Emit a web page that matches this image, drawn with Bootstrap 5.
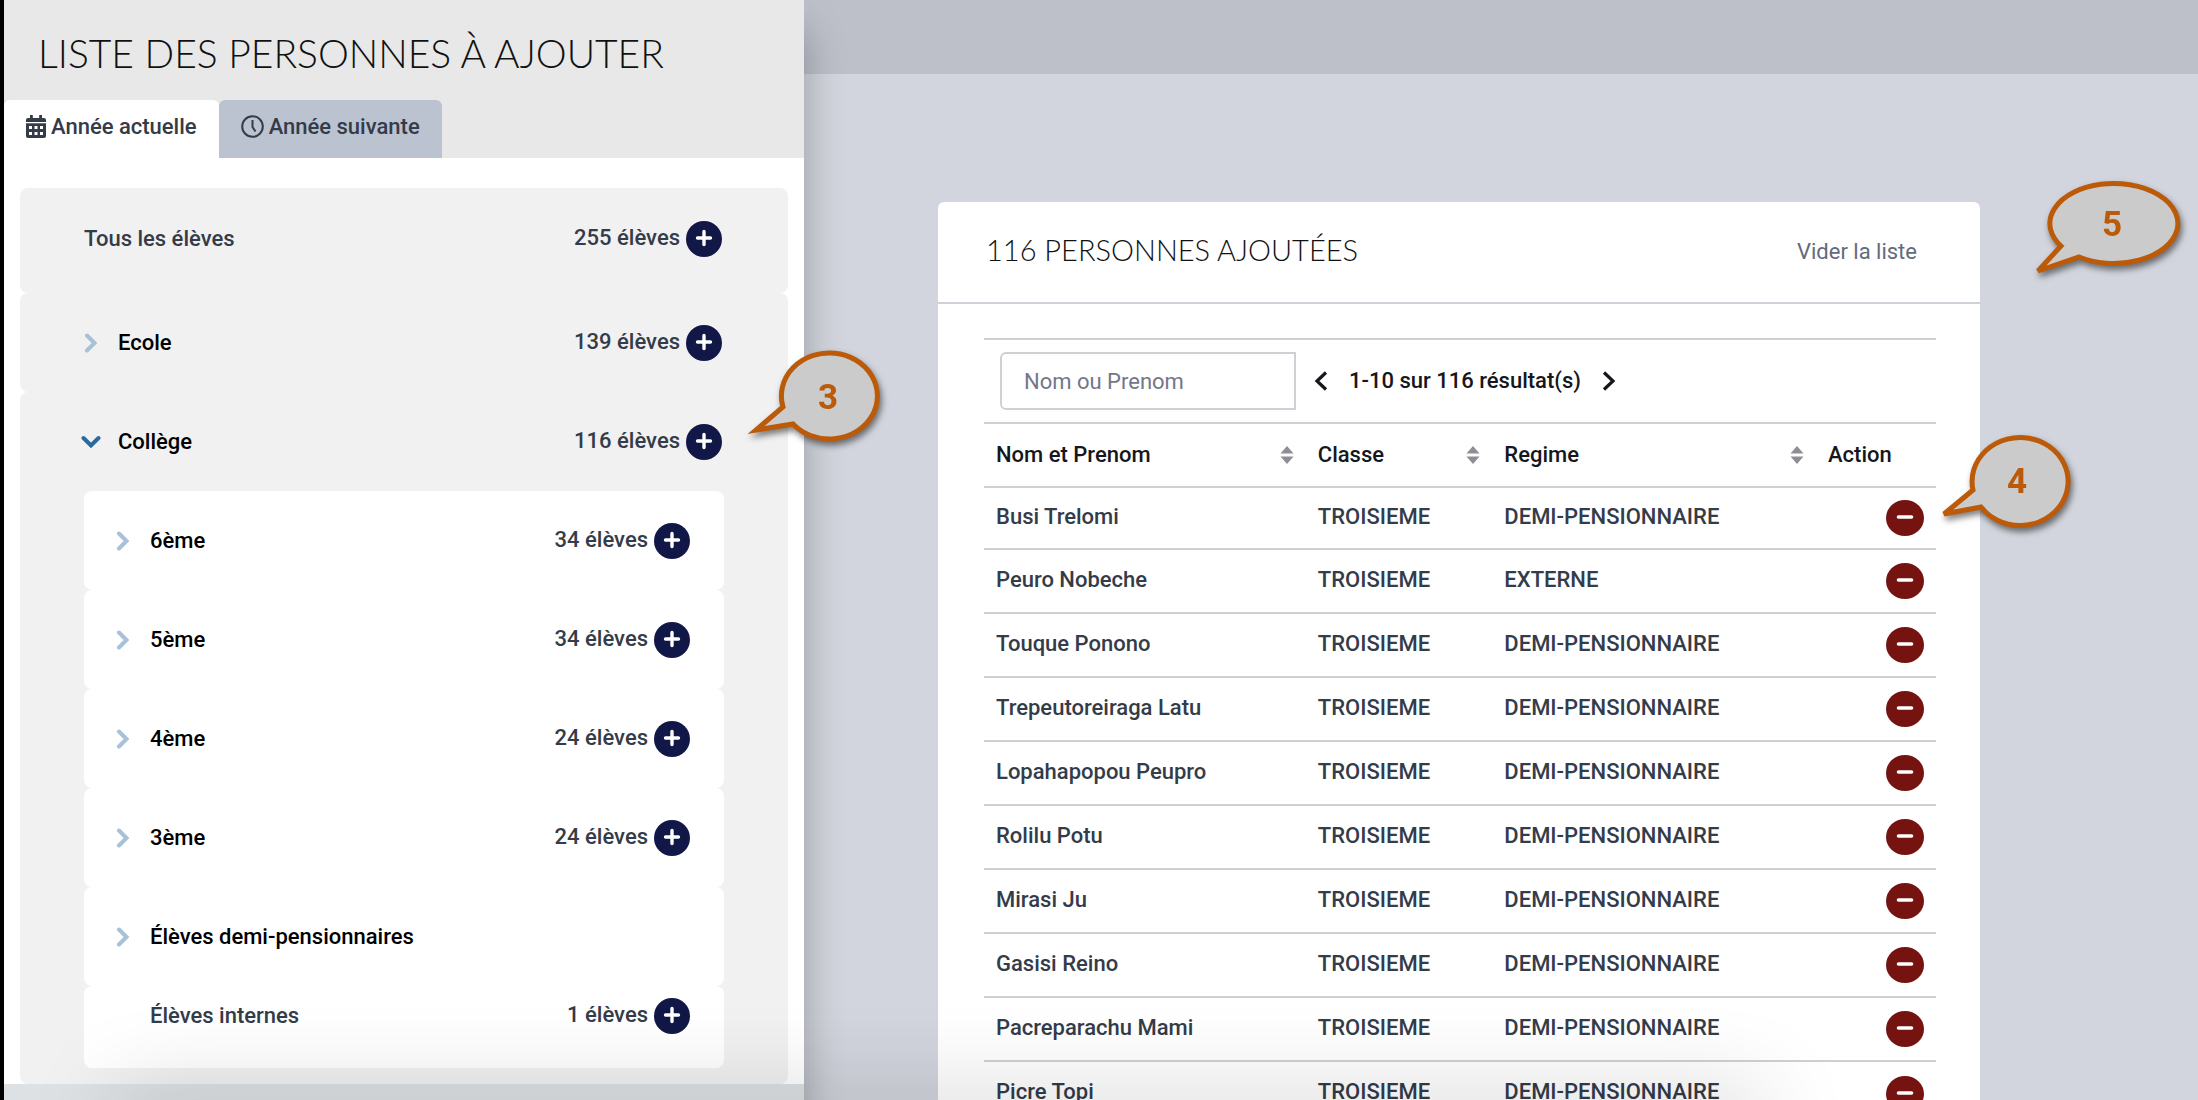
<!DOCTYPE html>
<html lang="fr">
<head>
<meta charset="utf-8">
<meta name="viewport" content="width=device-width, initial-scale=1">
<title>Liste des personnes à ajouter</title>
<link href="https://cdn.jsdelivr.net/npm/bootstrap@5.3.0/dist/css/bootstrap.min.css" rel="stylesheet">
<style>
  html, body { height: 100%; }
  body { font-family: Roboto, sans-serif; font-size: 22px; font-weight: 500; line-height: 28px; color: #343b49; background: #d2d5dd; overflow: hidden; }
  h1, h2 { font-family: Lato, sans-serif; font-weight: 300; color: #111; text-transform: uppercase; margin: 0; }
  h1 { font-size: 39px; line-height: 48px; padding: 29px 34px 23px; }
  h2 { font-size: 29px; line-height: 36px; padding-bottom: 4px; }
  .screen { min-height: 100vh; }
  .side { flex: 0 0 804px; height: 100vh; border-left: 4px solid #000; background: #dde1e4; box-shadow: 0 30px 38px rgba(0,0,0,.28); z-index: 2; overflow: hidden; }
  .side-head { background: #e8e8e8; }
  .tabs .nav-link { height: 58px; padding: 13px 22px 0; border: 0; border-radius: 6px 6px 0 0; color: #343b49; background: #bbc2d0; display: flex; align-items: flex-start; gap: 5px; }
  .tabs .nav-link.active { background: #fff; color: #343b49; }
  .tabs svg { margin-top: 2px; }
  .side-body { background: #fff; padding: 30px 16px 0; }
  .group { background: #f1f1f1; border-radius: 8px; }
  .line { height: 99px; padding: 0 66px 0 64px; }
  .line-top { height: 105px; padding-bottom: 4px; }
  .sub .line { background: #fff; border-radius: 8px; padding: 0 34px 0 32px; }
  .sub .line-last { height: 82px; padding: 0 34px 22px 66px; }
  .sub { padding: 0 64px 16px 64px; }
  .tally { display: flex; align-items: center; gap: 6px; }
  .tally span { padding-bottom: 2px; }
  .toggle { display: flex; align-items: center; gap: 20px; border: 0; background: none; padding: 0; color: #000; font-weight: 500; line-height: 28px; }
  .toggle svg { color: #a8c1d8; }
  .toggle[aria-expanded=true] svg { color: #2a6a9e; margin: 0 -3px; }
  .round { width: 36px; height: 36px; border: 0; border-radius: 50%; padding: 0 0 2px; display: inline-flex; align-items: center; justify-content: center; color: #fff; background: #111848; flex: none; }
  .round.minus { background: #751311; width: 38px; height: 36px; }
  .topbar { height: 74px; background: #bdc0c9; }
  .list-area { padding: 128px 218px 0 134px; }
  .panel { background: #fff; border-radius: 6px; min-height: calc(100vh - 202px); }
  .panel-head { height: 102px; padding: 0 63px 0 48px; border-bottom: 2px solid #cdd1d8; }
  .panel-head a { color: #636b7b; text-decoration: none; font-weight: 400; }
  .panel-body { padding: 34px 44px 0 46px; }
  .tools { border-top: 2px solid #cdd1d6; padding: 12px 16px; height: 84px; }
  .tools input { width: 296px; height: 58px; border: 2px solid #cdd1d6; border-radius: 6px 0 0 6px; padding: 0 22px; background: #fff; }
  .tools input::placeholder { color: #747689; opacity: 1; }
  .pager { margin-left: 18px; color: #15171c; gap: 21px; }
  .pager button { border: 0; background: none; padding: 0; color: #15171c; display: flex; }
  .people { width: 100%; table-layout: fixed; margin: 0; }
  .people th, .people td { height: 64px; padding: 0 12px; border-top: 2px solid #cdd1d6; vertical-align: middle; }
  .people th { font-weight: 500; color: #15171c; }
  .people tbody tr:first-child td { height: 62px; }
  .people td { padding-bottom: 3px; }
  .people td:last-child { text-align: right; padding-bottom: 0; line-height: 0; }
  .foot-shade { position: fixed; bottom: -40px; left: 120px; right: 440px; height: 40px; box-shadow: 0 0 90px 6px rgba(0,0,0,.18); z-index: 4; }
  .callout { position: absolute; z-index: 5; overflow: visible; filter: drop-shadow(2px 4px 3px rgba(0,0,0,.5)); }
  .callout path { fill: #cbcbcb; stroke: #bb5a08; stroke-width: 5; }
  .callout text { font: 700 35px Roboto, sans-serif; fill: #bb5a08; text-anchor: middle; }
  .c3 { left: 750px; top: 351px; }
  .c4 { right: 131px; top: 433px; }
  .c5 { right: 20px; top: 181px; }
</style>
<script src="https://cdn.jsdelivr.net/npm/bootstrap@5.3.0/dist/js/bootstrap.bundle.min.js"></script>
</head>
<body>
<svg width="0" height="0" class="position-absolute" aria-hidden="true">
  <symbol id="plus" viewBox="0 0 20 20"><path d="M10 3.500v13M3.500 10h13" fill="none" stroke="currentColor" stroke-width="3.400" stroke-linecap="round"/></symbol>
  <symbol id="dash" viewBox="0 0 20 20"><path d="M3.500 10h13" fill="none" stroke="currentColor" stroke-width="3.600" stroke-linecap="round"/></symbol>
  <symbol id="right" viewBox="0 0 14 20"><path d="M3 2.500l7.500 7.500L3 17.500" fill="none" stroke="currentColor" stroke-width="4" stroke-linecap="round"/></symbol>
  <symbol id="down" viewBox="0 0 20 14"><path d="M2.500 3l7.500 7.500L17.500 3" fill="none" stroke="currentColor" stroke-width="4" stroke-linecap="round"/></symbol>
  <symbol id="chev" viewBox="0 0 14 20"><path d="M2 1.500l9 8.500-9 8.500" fill="none" stroke="currentColor" stroke-width="3.200"/></symbol>
  <symbol id="sort" viewBox="0 0 14 18"><path d="M7 0l6.500 7.500H.5zM7 18l6.500-7.500H.5z" fill="#8d8f94"/></symbol>
</svg>

<div class="screen d-flex position-relative">
  <aside class="side">
    <div class="side-head">
      <h1>Liste des personnes à ajouter</h1>
      <nav class="tabs nav">
        <button type="button" class="nav-link active">
          <svg width="20" height="23" viewBox="0 0 20 23" fill="currentColor"><path d="M4 0h2.800v3h6.400V0H16v3h2a2 2 0 0 1 2 2v2H0V5a2 2 0 0 1 2-2h2z"/><path fill-rule="evenodd" d="M0 8.300h20V21a2 2 0 0 1-2 2H2a2 2 0 0 1-2-2zM3 11v3h3v-3zm5.500 0v3h3v-3zm5.500 0v3h3v-3zM3 17v3h3v-3zm5.500 0v3h3v-3zm5.500 0v3h3v-3z"/></svg>
          <span>Année actuelle</span>
        </button>
        <button type="button" class="nav-link">
          <svg width="23" height="23" viewBox="0 0 23 23" fill="none" stroke="currentColor" stroke-width="2"><circle cx="11.500" cy="11.500" r="10.300"/><path d="M11.500 5v7l3 4.500"/></svg>
          <span>Année suivante</span>
        </button>
      </nav>
    </div>
    <div class="side-body">
      <div class="group line line-top d-flex align-items-center justify-content-between">
        <span>Tous les élèves</span>
        <div class="tally"><span>255 élèves</span><button type="button" class="round" aria-label="Ajouter tous les élèves"><svg width="20" height="20"><use href="#plus"/></svg></button></div>
      </div>
      <div class="group line d-flex align-items-center justify-content-between">
        <button type="button" class="toggle"><svg width="14" height="20"><use href="#right"/></svg>Ecole</button>
        <div class="tally"><span>139 élèves</span><button type="button" class="round" aria-label="Ajouter Ecole"><svg width="20" height="20"><use href="#plus"/></svg></button></div>
      </div>
      <div class="group">
        <div class="line d-flex align-items-center justify-content-between">
          <button type="button" class="toggle" aria-expanded="true"><svg width="20" height="14"><use href="#down"/></svg>Collège</button>
          <div class="tally"><span>116 élèves</span><button type="button" class="round" aria-label="Ajouter Collège"><svg width="20" height="20"><use href="#plus"/></svg></button></div>
        </div>
        <div class="sub" id="levels"></div>
      </div>
    </div>
  </aside>

  <main class="flex-fill">
    <div class="topbar"></div>
    <div class="list-area">
      <section class="panel">
        <div class="panel-head d-flex align-items-center justify-content-between">
          <h2>116 personnes ajoutées</h2>
          <a href="#">Vider la liste</a>
        </div>
        <div class="panel-body">
          <div class="tools d-flex align-items-center">
            <input type="text" placeholder="Nom ou Prenom" aria-label="Nom ou Prenom">
            <div class="pager d-flex align-items-center">
              <button type="button" aria-label="Page précédente"><svg width="14" height="20" viewBox="0 0 14 20"><path d="M12 1.500L3 10l9 8.500" fill="none" stroke="currentColor" stroke-width="3.200"/></svg></button>
              <span>1-10 sur 116 résultat(s)</span>
              <button type="button" aria-label="Page suivante"><svg width="14" height="20"><use href="#chev"/></svg></button>
            </div>
          </div>
          <table class="people">
            <colgroup><col style="width:33.8%"><col style="width:19.6%"><col style="width:34%"><col></colgroup>
            <thead>
              <tr>
                <th scope="col"><span class="d-flex align-items-center justify-content-between">Nom et Prenom<svg width="14" height="18"><use href="#sort"/></svg></span></th>
                <th scope="col"><span class="d-flex align-items-center justify-content-between">Classe<svg width="14" height="18"><use href="#sort"/></svg></span></th>
                <th scope="col"><span class="d-flex align-items-center justify-content-between">Regime<svg width="14" height="18"><use href="#sort"/></svg></span></th>
                <th scope="col">Action</th>
              </tr>
            </thead>
            <tbody id="people"></tbody>
          </table>
        </div>
      </section>
    </div>
  </main>

  <svg class="callout c3" width="130" height="94"><path d="M33 56A48 43 0 1 1 43 73L6 79Z"/><text x="78" y="58">3</text></svg>
  <svg class="callout c4" width="130" height="94"><path d="M36 57A48 44 0 1 1 44 74L7 81Z"/><text x="80" y="60">4</text></svg>
  <svg class="callout c5" width="146" height="94"><path d="M29 65A64 40 0 1 1 47 76L6 90Z"/><text x="80" y="55">5</text></svg>
</div>
<div class="foot-shade"></div>

<script>
  const levels = [["6ème", 34], ["5ème", 34], ["4ème", 24], ["3ème", 24], ["Élèves demi-pensionnaires", null], ["Élèves internes", 1]];
  document.getElementById("levels").innerHTML = levels.map(([name, n], i) => {
    const last = i === levels.length - 1;
    const label = last ? `<span>${name}</span>` : `<button type="button" class="toggle"><svg width="14" height="20"><use href="#right"/></svg>${name}</button>`;
    const add = n === null ? "" : `<div class="tally"><span>${n} élèves</span><button type="button" class="round" aria-label="Ajouter ${name}"><svg width="20" height="20"><use href="#plus"/></svg></button></div>`;
    return `<div class="line ${last ? "line-last" : ""} d-flex align-items-center justify-content-between">${label}${add}</div>`;
  }).join("");

  const people = ["Busi Trelomi", "Peuro Nobeche", "Touque Ponono", "Trepeutoreiraga Latu", "Lopahapopou Peupro", "Rolilu Potu", "Mirasi Ju", "Gasisi Reino", "Pacreparachu Mami", "Picre Topi"];
  document.getElementById("people").innerHTML = people.map(p =>
    `<tr><td>${p}</td><td>TROISIEME</td><td>${p === "Peuro Nobeche" ? "EXTERNE" : "DEMI-PENSIONNAIRE"}</td><td><button type="button" class="round minus" aria-label="Retirer ${p}"><svg width="20" height="20"><use href="#dash"/></svg></button></td></tr>`
  ).join("");
</script>
</body>
</html>
